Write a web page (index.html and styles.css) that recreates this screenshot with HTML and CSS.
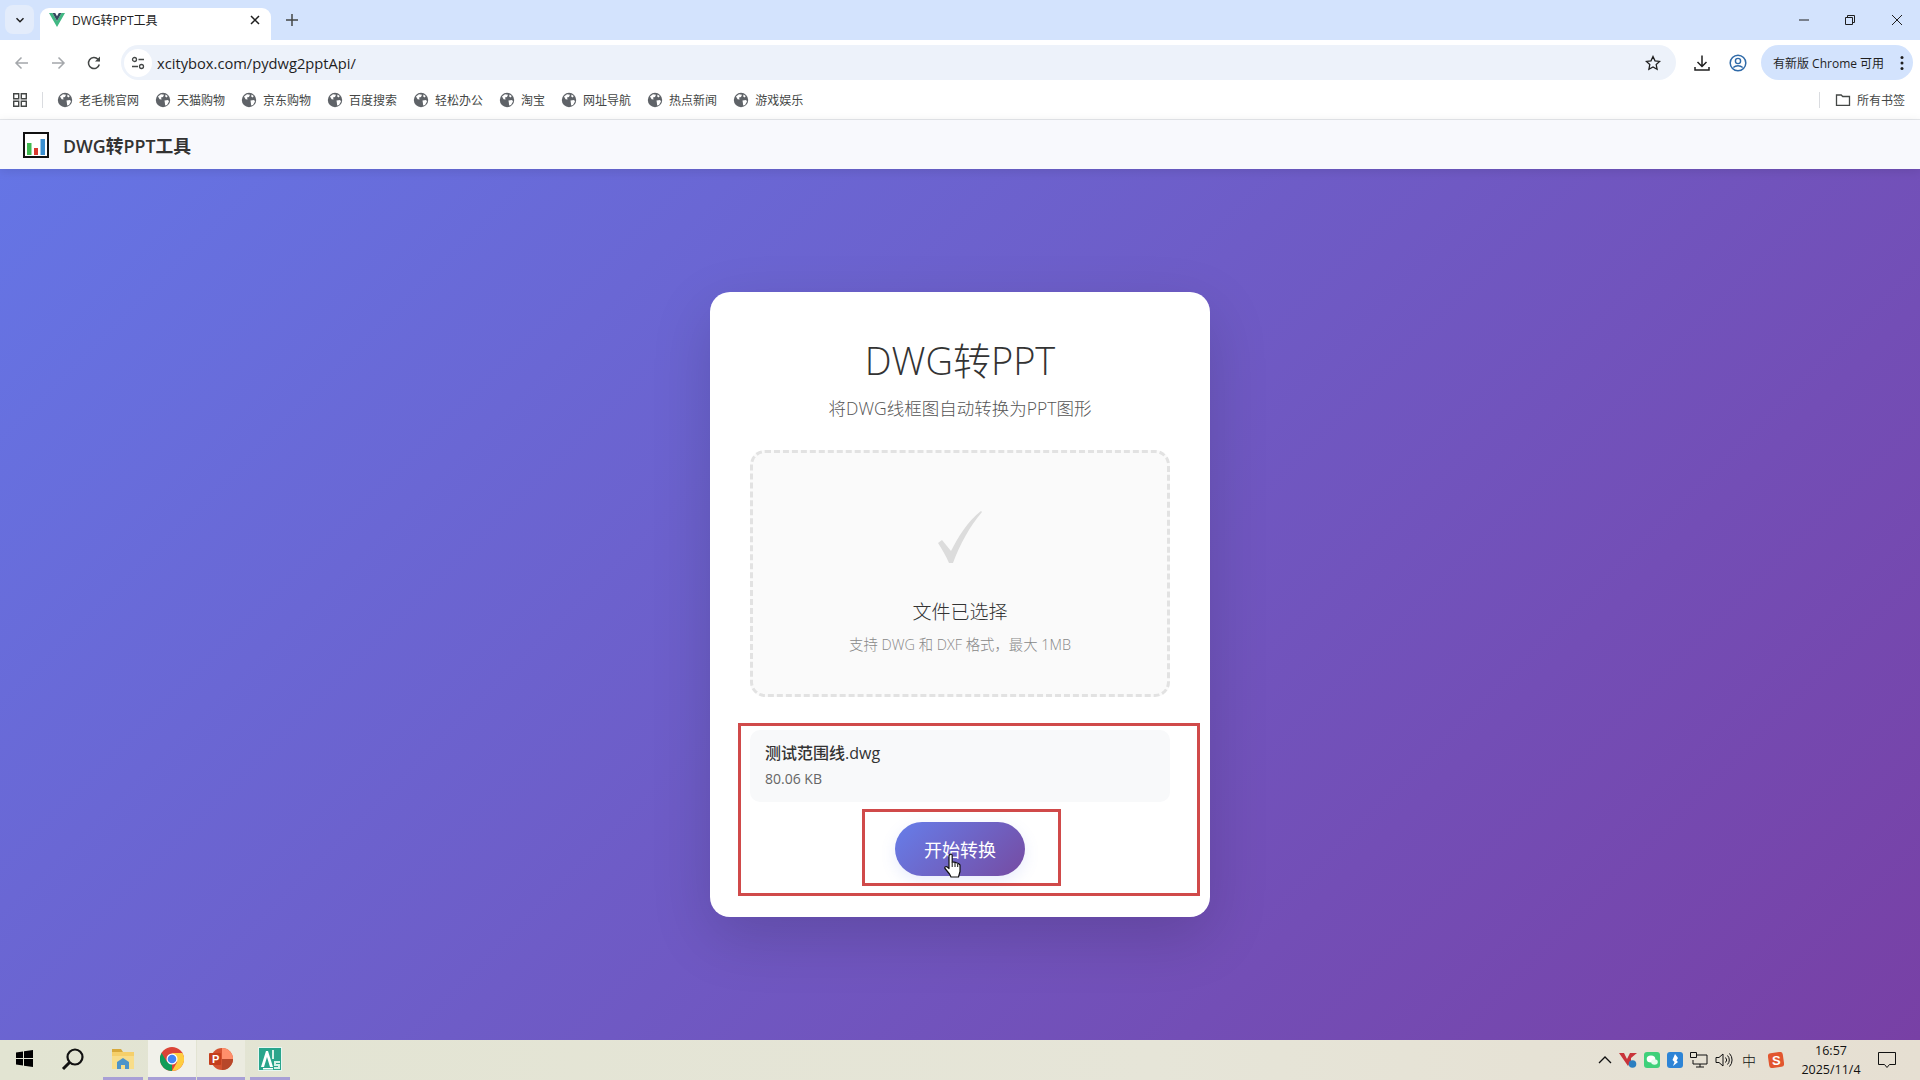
FILE: index.html
```html
<!DOCTYPE html>
<html lang="zh-CN">
<head>
<meta charset="UTF-8">
<title>DWG转PPT工具</title>
<link rel="stylesheet" href="styles.css">
</head>
<body>
<svg class="defs" width="0" height="0">
	<symbol id="globe" viewBox="0 0 16 16">
		<circle cx="8" cy="8" r="7.2" fill="#5f6368"/>
		<path d="M3 4.5l3-2.3 3 .6-1 2.2-2 .6.6 2-2-.3zM9.5 8.5l3.6-.6.9 1.6-2 3.5-1.800.6-.4-3zM10.500 2.500l2.200 1.500-1 1.500-1.500-1z" fill="#fff"/>
	</symbol>
</svg>

<div class="tabstrip">
	<div class="tab-list"><svg width="10" height="10" viewBox="0 0 10 10"><path d="M1.500 3.300L5 6.800l3.500-3.500" fill="none" stroke="#1f1f1f" stroke-width="1.500"/></svg></div>
	<div class="tab">
		<svg class="tab-icon" width="16" height="16" viewBox="0 0 16 16"><path d="M0 1h3.500L8 9l4.500-8H16L8 15z" fill="#41b883"/><path d="M3.500 1h2.700L8 4.200 9.800 1h2.700L8 9z" fill="#35495e"/></svg>
		<span class="tab-title">DWG转PPT工具</span>
		<svg class="tab-close" width="10" height="10" viewBox="0 0 10 10"><path d="M1 1l8 8M9 1l-8 8" stroke="#1f1f1f" stroke-width="1.500"/></svg>
	</div>
	<svg class="new-tab" width="12" height="12" viewBox="0 0 12 12"><path d="M6 0v12M0 6h12" stroke="#444746" stroke-width="1.500"/></svg>
	<div class="win-btns">
		<svg width="10" height="10" viewBox="0 0 10 10"><path d="M0 5h10" stroke="#1f1f1f"/></svg>
		<svg width="10" height="10" viewBox="0 0 10 10"><path d="M.5 2.500h7v7h-7zM2.500 2.500v-2h7v7h-2" fill="none" stroke="#1f1f1f"/></svg>
		<svg width="12" height="12" viewBox="0 0 12 12"><path d="M1 1l10 10M11 1L1 11" stroke="#1f1f1f"/></svg>
	</div>
</div>

<div class="toolbar">
	<svg class="nav" width="16" height="16" viewBox="0 0 16 16"><path d="M14 8H2M7.500 2.500L2 8l5.500 5.500" fill="none" stroke="#a4a7ab" stroke-width="1.500"/></svg>
	<svg class="nav" width="16" height="16" viewBox="0 0 16 16"><path d="M2 8h12M8.500 2.500L14 8l-5.500 5.500" fill="none" stroke="#a4a7ab" stroke-width="1.500"/></svg>
	<svg class="nav" width="16" height="16" viewBox="0 0 16 16"><path d="M13.300 9.500A5.500 5.500 0 1 1 12 4.300L13.500 6" fill="none" stroke="#444746" stroke-width="1.500"/><path d="M14 1.500V6.500H9z" fill="#444746"/></svg>
	<div class="omnibox">
		<div class="site-info"><svg width="14" height="14" viewBox="0 0 14 14"><circle cx="3.500" cy="3.500" r="2" fill="none" stroke="#444746" stroke-width="1.300"/><path d="M7.500 3.500H13M1 10.500h6" stroke="#444746" stroke-width="1.300"/><circle cx="10.500" cy="10.500" r="2" fill="none" stroke="#444746" stroke-width="1.300"/></svg></div>
		<span class="url">xcitybox.com/pydwg2pptApi/</span>
		<svg class="star" width="16" height="16" viewBox="0 0 16 16"><path d="M8 1.500l2 4.300 4.700.6-3.500 3.200.9 4.700L8 12l-4.100 2.300.9-4.700L1.300 6.400 6 5.800z" fill="none" stroke="#1f1f1f" stroke-width="1.300"/></svg>
	</div>
	<svg class="tool-dl" width="18" height="18" viewBox="0 0 18 18"><path d="M9 1.500v11M4.500 8L9 12.500 13.500 8M2 13v3h14v-3" fill="none" stroke="#1f1f1f" stroke-width="1.500"/></svg>
	<svg class="tool-user" width="18" height="18" viewBox="0 0 18 18"><circle cx="9" cy="9" r="7.800" fill="none" stroke="#2f6aa8" stroke-width="1.500"/><circle cx="9" cy="7" r="2.600" fill="none" stroke="#2f6aa8" stroke-width="1.400"/><path d="M4.300 13.500c2.500-2.400 6.900-2.400 9.400 0" fill="none" stroke="#2f6aa8" stroke-width="1.400"/></svg>
	<div class="update-pill">
		<span>有新版 Chrome 可用</span>
		<svg width="4" height="16" viewBox="0 0 4 16"><circle cx="2" cy="2.500" r="1.500" fill="#1f1f1f"/><circle cx="2" cy="8" r="1.500" fill="#1f1f1f"/><circle cx="2" cy="13.500" r="1.500" fill="#1f1f1f"/></svg>
	</div>
</div>

<div class="bookmarks">
	<svg class="apps" width="14" height="14" viewBox="0 0 14 14"><path d="M.7.700h5v5h-5zM8.300.700h5v5h-5zM.7 8.300h5v5h-5zM8.300 8.300h5v5h-5z" fill="none" stroke="#444746" stroke-width="1.400"/></svg>
	<i class="bm-sep"></i>
	<div class="bm-list">
		<span class="bm"><svg width="16" height="16"><use href="#globe"/></svg>老毛桃官网</span>
		<span class="bm"><svg width="16" height="16"><use href="#globe"/></svg>天猫购物</span>
		<span class="bm"><svg width="16" height="16"><use href="#globe"/></svg>京东购物</span>
		<span class="bm"><svg width="16" height="16"><use href="#globe"/></svg>百度搜索</span>
		<span class="bm"><svg width="16" height="16"><use href="#globe"/></svg>轻松办公</span>
		<span class="bm"><svg width="16" height="16"><use href="#globe"/></svg>淘宝</span>
		<span class="bm"><svg width="16" height="16"><use href="#globe"/></svg>网址导航</span>
		<span class="bm"><svg width="16" height="16"><use href="#globe"/></svg>热点新闻</span>
		<span class="bm"><svg width="16" height="16"><use href="#globe"/></svg>游戏娱乐</span>
	</div>
	<i class="bm-sep bm-sep-right"></i>
	<span class="bm bm-all"><svg width="16" height="16" viewBox="0 0 16 16"><path d="M1.500 3h4.700l1.500 1.500h6.800v8.800h-13z" fill="none" stroke="#444746" stroke-width="1.300"/></svg>所有书签</span>
</div>

<header class="app-header">
	<svg class="app-logo" width="26" height="26" viewBox="0 0 26 26"><rect x="1" y="1" width="24" height="24" fill="#fff" stroke="#111" stroke-width="2"/><rect x="4" y="11" width="4.500" height="12" fill="#3fb950"/><rect x="11" y="16" width="4" height="7" fill="#d9382e"/><rect x="17.500" y="7" width="4.500" height="16" fill="#3b8fd0"/></svg>
	<span class="app-name">DWG转PPT工具</span>
</header>

<main class="stage">
	<section class="card">
		<h1 class="card-title">DWG转PPT</h1>
		<p class="card-sub">将DWG线框图自动转换为PPT图形</p>
		<div class="dropzone">
			<svg class="check" width="44" height="54" viewBox="0 0 44 54"><path d="M0 33l4-3 9 11C20 27 30 11 43 1l1 1C32 16 22 34 15 53h-4C8 46 4 39 0 33z" fill="#dcdcdc"/></svg>
			<div class="drop-title">文件已选择</div>
			<div class="drop-hint">支持 DWG 和 DXF 格式，最大 1MB</div>
		</div>
		<div class="file-box">
			<div class="file-name">测试范围线.dwg</div>
			<div class="file-size">80.06 KB</div>
		</div>
		<button class="go-btn">开始转换</button>
		<i class="mark mark-outer"></i>
		<i class="mark mark-inner"></i>
		<svg class="hand" width="18" height="26" viewBox="0 0 18 26"><path d="M6 1.500c1-.8 2.200-.3 2.200 1V9l2 .2 2 .5 2.300.8 1.500 1.500v6.500L14.500 24H7l-1.500-3L1 15.500c-.7-1.300.6-2.500 2-1.700L5 15.500V2.500z" fill="#fff" stroke="#111" stroke-width="1.200" stroke-linejoin="round"/><path d="M8.200 9v5M11 10v4M13.700 11v3" stroke="#111"/></svg>
	</section>
</main>

<footer class="taskbar">
	<div class="tb-item tb-start"><svg width="17" height="17" viewBox="0 0 17 17"><path d="M0 2.400L7 1.400V8H0zM8 1.200L17 0v8H8zM0 9h7v6.600L0 14.600zM8 9h9v8L8 15.800z" fill="#000"/></svg></div>
	<div class="tb-item tb-search"><svg width="24" height="24" viewBox="0 0 24 24"><circle cx="14" cy="10" r="7.500" fill="none" stroke="#111" stroke-width="2.200"/><path d="M8.500 15.500L2 22" stroke="#111" stroke-width="3"/></svg></div>
	<div class="tb-item tb-open tb-slim"><svg width="24" height="22" viewBox="0 0 24 22"><path d="M1 1h9l2 3h-11z" fill="#d8a93b"/><path d="M1 4h22v17H1z" fill="#f5cf6a"/><path d="M1 8h22v13H1z" fill="#f8dd8a"/><path d="M6 21v-7l6-4 6 4v7z" fill="#4d94c9"/><path d="M10 21v-4h4v4z" fill="#f8dd8a"/></svg></div>
	<div class="tb-item tb-open tb-active"><svg width="24" height="24" viewBox="0 0 24 24"><circle cx="12" cy="12" r="12" fill="#db4437"/><path d="M12 24A12 12 0 0 1 1.600 6L7 15l5 1z" fill="#0f9d58"/><path d="M12 6h10.400A12 12 0 0 1 12 24l5.200-9z" fill="#ffcd40"/><circle cx="12" cy="12" r="5.500" fill="#fff"/><circle cx="12" cy="12" r="4.300" fill="#4285f4"/></svg></div>
	<div class="tb-item tb-open tb-hot"><svg width="24" height="24" viewBox="0 0 24 24"><circle cx="13" cy="12" r="11" fill="#d35230"/><path d="M13 1a11 11 0 0 1 11 11H13z" fill="#ff8f6b"/><path d="M13 12h11a11 11 0 0 1-11 11z" fill="#b7472a"/><rect y="6" width="12" height="12" rx="1" fill="#c43e1c"/><text x="3" y="15.500" class="ppt-letter">P</text></svg></div>
	<div class="tb-item tb-open tb-slim"><svg width="24" height="24" viewBox="0 0 24 24"><rect width="24" height="24" fill="#e8f6f1"/><rect x="1" y="1" width="22" height="22" fill="#2aa58c"/><path d="M3 20L8 4h2l5 16h-3l-3-10-3 10z" fill="#fff"/><path d="M5 21h10v1.500H5z" fill="#fff"/><path d="M14 3h2v9h-2zM16 14h6v2h-4v1h4v5h-6v-2h4v-1h-4z" fill="#d6f1e8"/></svg></div>

	<div class="tray">
		<svg class="tray-chev" width="14" height="8" viewBox="0 0 14 8"><path d="M1 7l6-6 6 6" fill="none" stroke="#111" stroke-width="1.300"/></svg>
		<svg width="18" height="16" viewBox="0 0 18 16"><path d="M0 1h5l3 6 3-6h7l-6 5v3L9 14z" fill="#c9343a"/><circle cx="13.500" cy="12" r="3.800" fill="#2c7fc1"/></svg>
		<svg width="16" height="16" viewBox="0 0 16 16"><rect width="16" height="16" rx="3" fill="#3fd07a"/><ellipse cx="7" cy="7" rx="4.300" ry="3.500" fill="#fff"/><ellipse cx="10.500" cy="10" rx="3.300" ry="2.700" fill="#e4fbec"/></svg>
		<svg width="16" height="16" viewBox="0 0 16 16"><rect width="16" height="16" rx="3" fill="#2d84d6"/><path d="M8 2l3 4-1.500 2.500L11 10l-5 4 1.500-4L5.500 8z" fill="#fff"/></svg>
		<svg width="18" height="16" viewBox="0 0 18 16"><path d="M5 3h12v9H3V8M10 12v3M6 15h8" fill="none" stroke="#111"/><path d="M.5.500h6v5h-6z" fill="#e5e2d4" stroke="#111"/></svg>
		<svg width="18" height="16" viewBox="0 0 18 16"><path d="M1 5.500h3L8 2v12l-4-3.500H1z" fill="none" stroke="#111"/><path d="M10.500 5.500a3.500 3.500 0 0 1 0 5M12.500 3.500a6.500 6.500 0 0 1 0 9M14.500 1.500a9.500 9.500 0 0 1 0 13" fill="none" stroke="#111"/></svg>
		<span class="tray-ime">中</span>
		<svg class="tray-sogou" width="16" height="16" viewBox="0 0 16 16"><rect x=".5" y=".5" width="15" height="15" rx="3" fill="#e2562f" transform="rotate(-8 8 8)"/><text x="4" y="13" class="sogou-letter">S</text></svg>
		<div class="clock"><div>16:57</div><div>2025/11/4</div></div>
		<svg class="tray-note" width="18" height="17" viewBox="0 0 18 17"><path d="M.5.500h17v12h-6l-2.500 3-2.500-3h-6z" fill="none" stroke="#111"/></svg>
	</div>
</footer>
</body>
</html>
```

FILE: styles.css
```css
* {
	box-sizing: border-box;
}
html, body {
	margin: 0;
	height: 100%;
}
body {
	display: flex;
	flex-direction: column;
	height: 1080px;
	overflow: hidden;
	font-family: "Open Sans", "Noto Sans CJK SC", sans-serif;
	color: #1f1f1f;
}
.defs {
	position: absolute;
}

/* browser chrome */
.tabstrip {
	display: flex;
	align-items: flex-end;
	height: 40px;
	flex: none;
	background: #d3e3fd;
	padding-left: 5px;
}
.tab-list {
	display: flex;
	align-items: center;
	justify-content: center;
	width: 29px;
	height: 29px;
	margin-bottom: 6px;
	border-radius: 8px;
	background: #e3ecfb;
}
.tab {
	display: flex;
	align-items: center;
	width: 231px;
	height: 32px;
	margin-left: 6px;
	padding: 0 11px 8px 9px;
	background: #fff;
	border-radius: 9px 9px 0 0;
}
.tab-icon {
	flex: none;
}
.tab-title {
	margin-left: 7px;
	font-size: 12px;
	flex: 1;
}
.new-tab {
	margin: 0 0 14px 15px;
}
.win-btns {
	display: flex;
	align-items: center;
	gap: 36px;
	margin: 0 17px 14px auto;
}
.toolbar {
	display: flex;
	align-items: center;
	height: 40px;
	flex: none;
	background: #fff;
	padding: 5px 0 0 14px;
}
.nav {
	margin-right: 20px;
}
.omnibox {
	display: flex;
	align-items: center;
	width: 1555px;
	height: 35px;
	margin-left: -1px;
	padding: 0 15px 0 3px;
	border-radius: 18px;
	background: #edf2fa;
}
.site-info {
	display: flex;
	align-items: center;
	justify-content: center;
	width: 28px;
	height: 28px;
	border-radius: 50%;
	background: #fff;
}
.url {
	margin-left: 5px;
	font-size: 14.7px;
}
.star {
	margin-left: auto;
}
.tool-dl {
	margin-left: 17px;
}
.tool-user {
	margin-left: 18px;
}
.update-pill {
	display: flex;
	align-items: center;
	justify-content: space-between;
	width: 152px;
	height: 35px;
	margin-left: 14px;
	padding: 0 9px 0 12px;
	border-radius: 18px;
	background: #d3e3fd;
	font-size: 12px;
}
.bookmarks {
	display: flex;
	align-items: center;
	height: 40px;
	flex: none;
	background: #fff;
	padding-left: 13px;
	border-bottom: 1px solid #e6e8ec;
}
.apps {
	flex: none;
}
.bm-sep {
	width: 1px;
	height: 16px;
	margin-left: 15px;
	background: #dadce0;
}
.bm-list {
	display: flex;
	gap: 16px;
	margin-left: 14px;
}
.bm {
	display: flex;
	align-items: center;
	gap: 6px;
	font-size: 12px;
	color: #444746;
}
.bm-sep-right {
	margin-left: auto;
}
.bm-all {
	margin: 0 15px 0 15px;
}

/* app */
.app-header {
	position: relative;
	display: flex;
	align-items: center;
	height: 49px;
	flex: none;
	padding-left: 23px;
	background: #f8f9fd;
	box-shadow: 0 2px 10px rgba(0, 0, 0, .1);
}
.app-name {
	margin-left: 14px;
	font-size: 17.8px;
	font-weight: 600;
	color: #333;
}
.stage {
	flex: 1;
	display: flex;
	align-items: center;
	justify-content: center;
	background: linear-gradient(135deg, #6575e5 0%, #7840a5 100%);
}
.card {
	position: relative;
	display: flex;
	flex-direction: column;
	align-items: center;
	width: 500px;
	height: 625px;
	padding: 40px;
	background: #fff;
	border-radius: 20px;
	box-shadow: 0 20px 60px rgba(0, 0, 0, .15);
}
.card-title {
	margin: 0;
	font-size: 38px;
	line-height: 56px;
	font-weight: 300;
	color: #333;
}
.card-sub {
	margin: 6px 0 0;
	font-size: 17.5px;
	line-height: 28px;
	font-weight: 300;
	color: #555;
}
.dropzone {
	display: flex;
	flex-direction: column;
	align-items: center;
	width: 420px;
	height: 247px;
	margin-top: 28px;
	padding-top: 57px;
	border: 3px dashed #e2e2e2;
	border-radius: 15px;
	background: #fafafa;
}
.drop-title {
	margin-top: 34px;
	font-size: 19px;
	line-height: 28px;
	font-weight: 300;
	color: #333;
}
.drop-hint {
	margin-top: 9px;
	font-size: 14.4px;
	line-height: 20px;
	font-weight: 300;
	color: #888;
}
.file-box {
	width: 420px;
	height: 72px;
	margin-top: 33px;
	padding: 11px 15px;
	border-radius: 10px;
	background: #f8f9fa;
}
.file-name {
	font-size: 16px;
	line-height: 24px;
	font-weight: 500;
	color: #333;
}
.file-size {
	margin-top: 4px;
	font-size: 14px;
	line-height: 20px;
	font-weight: 400;
	color: #666;
}
.go-btn {
	width: 130px;
	height: 54px;
	margin-top: 20px;
	border: none;
	border-radius: 27px;
	background: linear-gradient(135deg, #667eea 0%, #764ba2 100%);
	box-shadow: 0 5px 15px rgba(102, 126, 234, .15);
	color: #fff;
	font-family: inherit;
	font-size: 18px;
	font-weight: 400;
}

/* red annotation boxes and the pointer lie over the card */
.mark {
	position: absolute;
	border: 3px solid #d04a4a;
}
.mark-outer {
	left: 28px;
	top: 431px;
	width: 462px;
	height: 173px;
}
.mark-inner {
	left: 152px;
	top: 517px;
	width: 199px;
	height: 77px;
}
.hand {
	position: absolute;
	left: 234px;
	top: 561px;
}

/* windows taskbar */
.taskbar {
	display: flex;
	align-items: stretch;
	height: 40px;
	flex: none;
	background: linear-gradient(90deg, #e2e4d2 0%, #e6e5d8 60%, #e6dfd2 100%);
}
.tb-item {
	display: flex;
	align-items: center;
	justify-content: center;
	width: 48px;
	border-bottom: 3px solid transparent;
}
.tb-search {
	width: 50px;
}
.tb-open {
	border-bottom-color: #a89fd6;
}
.tb-slim {
	width: 40px;
	margin: 0 5px;
}
.tb-active {
	background-color: #f1f1ea;
	margin-right: 1px;
}
.tb-hot {
	background-color: #ebebe0;
}
.ppt-letter {
	font-family: "Liberation Sans", sans-serif;
	font-size: 11px;
	font-weight: bold;
	fill: #fff;
}
.tray {
	display: flex;
	align-items: center;
	gap: 7px;
	margin-left: auto;
	padding-right: 24px;
}
.tray-ime {
	margin: 0 2px;
	font-size: 14px;
	font-weight: 300;
	color: #111;
}
.sogou-letter {
	font-family: "Liberation Sans", sans-serif;
	font-size: 13px;
	font-weight: bold;
	fill: #fff;
}
.tray-sogou {
	margin-left: 3px;
}
.clock {
	width: 70px;
	margin-left: 5px;
	text-align: center;
	font-size: 12.5px;
	line-height: 19px;
	color: #111;
}
.tray-note {
	margin-left: 5px;
}
```
